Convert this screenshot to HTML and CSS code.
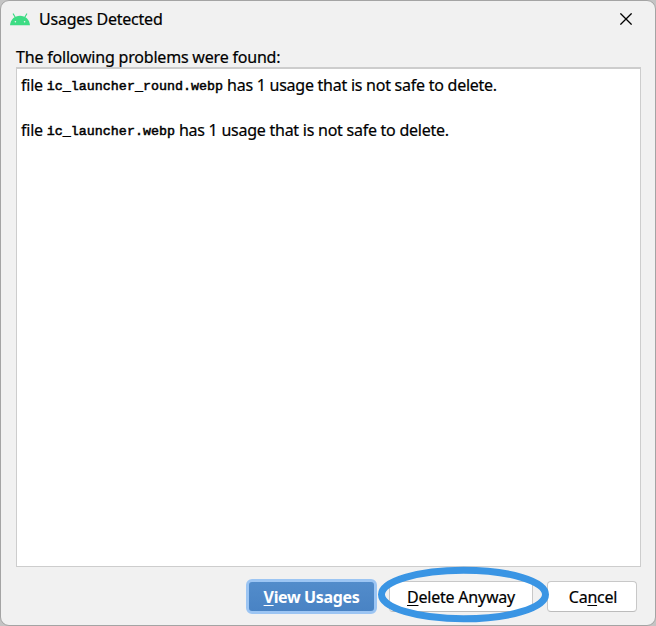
FILE: index.html
```
<!DOCTYPE html>
<html lang="en">
<head>
<meta charset="utf-8">
<title>Usages Detected</title>
<link rel="stylesheet" href="styles.css">
</head>
<body>
<div class="dialog">
  <header class="titlebar">
    <svg class="logo" width="20" height="13" viewBox="0 0 20 13">
      <path d="M5.200 4.200 3.300 1M14.800 4.200 16.700 1" stroke="#3ddc84" stroke-width="1.200" stroke-linecap="round"/>
      <path d="M0 12.300C.5 6.300 4.600 2.700 10 2.700s9.500 3.600 10 9.600z" fill="#3ddc84"/>
      <circle cx="5.400" cy="8.800" r=".8" fill="#f1f1f1"/><circle cx="14.600" cy="8.800" r=".8" fill="#f1f1f1"/>
    </svg>
    <h1 class="title">Usages Detected</h1>
    <svg class="close" width="12" height="12" viewBox="0 0 12 12"><path d="M.4.4 11.600 11.600M11.600.4.4 11.600" stroke="#000" stroke-width="1.300"/></svg>
  </header>
  <p class="label">The following problems were found:</p>
  <main class="problems">
    <p class="problem">file <code>ic_launcher_round.webp</code> has 1 usage that is not safe to delete.</p>
    <p class="problem">file <code>ic_launcher.webp</code> has 1 usage that is not safe to delete.</p>
  </main>
  <footer class="actions">
    <button class="btn primary"><span><u>V</u>iew Usages</span></button>
    <button class="btn delete"><span><u>D</u>elete Anyway</span></button>
    <button class="btn cancel"><span>Ca<u>n</u>cel</span></button>
  </footer>
  <svg class="highlight" width="174" height="58" viewBox="0 0 174 58"><ellipse cx="86.500" cy="28.500" rx="82" ry="24.300" fill="none" stroke="#3a95e4" stroke-width="7"/></svg>
</div>
</body>
</html>
```
FILE: styles.css
```
* { box-sizing: border-box; }
body { margin: 0; background: #c4c4c4; font-family: "Noto Sans", "Open Sans", sans-serif; font-size: 16px; color: #000; }
.dialog { position: relative; width: 656px; height: 626px; padding: 0 14px 0 15px; display: flex; flex-direction: column; background: #f1f1f1; border: 1px solid #a4a4a4; border-radius: 9px; overflow: hidden; }
p, h1 { margin: 0; font-weight: 400; white-space: nowrap; -webkit-text-stroke: .2px #000; }
.titlebar { height: 37px; margin: 0 9px 0 -6px; padding-bottom: 1px; display: flex; align-items: center; }
.logo { margin-right: 9px; }
.title { font-size: 16px; line-height: 20px; letter-spacing: -.22px; }
.close { margin-left: auto; }
.label { height: 29px; line-height: 38px; letter-spacing: -.2px; }
.problems { height: 500px; padding: 5px 4px; background: #fff; border: 1px solid #cdcdcd; border-top-width: 2px; }
.problem { height: 45px; line-height: 23px; letter-spacing: -.25px; }
.problem code { position: relative; top: -1px; font: 13.333px/20px "Liberation Mono", monospace; letter-spacing: .02px; -webkit-text-stroke: .5px #000; }
.actions { display: flex; justify-content: flex-end; align-items: center; height: 58px; padding-right: 4px; }
.btn { height: 31px; padding: 2px 0 0; border: 1px solid #c8c8c8; border-bottom-color: #bcbcbc; border-radius: 4px; background: #fff; font: 16px/20px "Noto Sans", sans-serif; letter-spacing: -.22px; color: #000; -webkit-text-stroke: .2px #000; }
.btn u { text-underline-offset: 2px; text-decoration-thickness: 1px; text-decoration-skip-ink: none; }
.primary { width: 131px; height: 35px; border: 3px solid #9cc5f3; border-radius: 6px; background: linear-gradient(#528ccb, #4983c4); color: #fff; font-weight: 700; letter-spacing: -.35px; -webkit-text-stroke: 0; }
.delete { width: 144px; margin-left: 12px; }
.cancel { width: 90px; margin-left: 14px; padding-left: 2px; }
.highlight { position: absolute; left: 376px; top: 565px; }
```
